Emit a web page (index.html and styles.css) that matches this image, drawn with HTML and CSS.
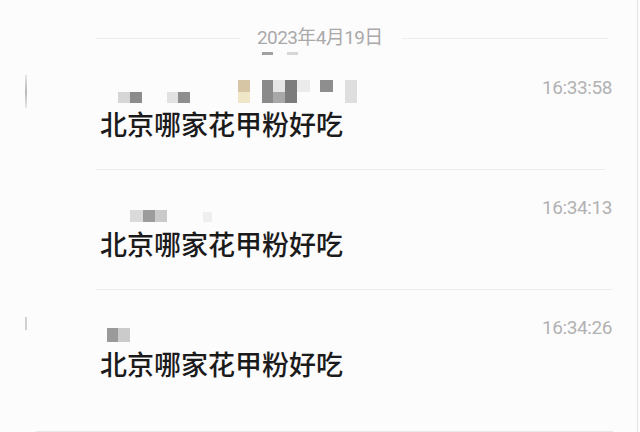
FILE: index.html
```html
<!DOCTYPE html>
<html lang="zh-CN">
<head>
    <meta charset="UTF-8">
    <meta name="viewport" content="width=device-width, initial-scale=1.0">
    <title>聊天记录</title>
    <link rel="stylesheet" href="styles.css">
</head>
<body>
    <div class="screen">
        <!-- 日期分隔 -->
        <div class="date-bar">
            <div class="date-line">
                <span class="rule-left"></span>
                <span class="date-text">2023年4月19日</span>
                <span class="rule-right"></span>
            </div>
            <div class="date-marks">
                <span class="mark dark"></span>
                <span class="mark light"></span>
            </div>
        </div>

        <div class="msg">
            <div class="gutter"><span class="edge-mark tall"></span></div>
            <div class="body">
                <svg class="name-blur" width="270" height="31" viewBox="0 0 270 31">
                    <rect x="22" y="14" width="12" height="11" fill="#d6d6d6"/>
                    <rect x="34" y="14" width="12" height="11" fill="#8c8c8c"/>
                    <rect x="71" y="14" width="11" height="11" fill="#e2e2e2"/>
                    <rect x="82" y="14" width="12" height="11" fill="#8e8e8e"/>
                    <rect x="142" y="2" width="12" height="12" fill="#d6c6a6"/>
                    <rect x="142" y="14" width="12" height="11" fill="#efe6c8"/>
                    <rect x="166" y="2" width="11" height="23" fill="#8a8a8a"/>
                    <rect x="177" y="2" width="12" height="12" fill="#e6e6e6"/>
                    <rect x="177" y="14" width="12" height="11" fill="#a8a8a8"/>
                    <rect x="189" y="2" width="12" height="23" fill="#7c7c7c"/>
                    <rect x="201" y="2" width="13" height="12" fill="#ebebeb"/>
                    <rect x="224" y="2" width="13" height="12" fill="#8e8e8e"/>
                    <rect x="249" y="2" width="12" height="23" fill="#dedede"/>
                </svg>
                <div class="text">北京哪家花甲粉好吃</div>
            </div>
            <div class="time">16:33:58</div>
        </div>
        <hr class="divider">

        <div class="msg">
            <div class="gutter"></div>
            <div class="body">
                <svg class="name-blur" width="270" height="31" viewBox="0 0 270 31">
                    <rect x="34" y="12" width="13" height="12" fill="#dadada"/>
                    <rect x="47" y="12" width="12" height="12" fill="#9c9c9c"/>
                    <rect x="59" y="12" width="12" height="12" fill="#cacaca"/>
                    <rect x="107" y="14" width="9" height="10" fill="#efefef"/>
                </svg>
                <div class="text">北京哪家花甲粉好吃</div>
            </div>
            <div class="time">16:34:13</div>
        </div>
        <hr class="divider wide">

        <div class="msg last">
            <div class="gutter"><span class="edge-mark short"></span></div>
            <div class="body">
                <svg class="name-blur" width="270" height="31" viewBox="0 0 270 31">
                    <rect x="11" y="10" width="11" height="14" fill="#9a9a9a"/>
                    <rect x="22" y="10" width="12" height="14" fill="#cbcbcb"/>
                </svg>
                <div class="text">北京哪家花甲粉好吃</div>
            </div>
            <div class="time">16:34:26</div>
        </div>
        <hr class="bottom-rule">
    </div>
</body>
</html>
```

FILE: styles.css
```css
body {
    margin: 0;
    background-color: #fdfcfd;
    font-family: Roboto, "Noto Sans CJK SC", sans-serif;
}
.screen {
    width: 637px;
    height: 432px;
    overflow: hidden;
    border-right: 1px solid #e4e4e4;
}

/* 日期 */
.date-bar {
    height: 50px;
    padding-top: 26px;
    box-sizing: border-box;
}
.date-line {
    display: flex;
    align-items: center;
    height: 24px;
    padding: 0 29px 0 96px;
}
.rule-left {
    width: 144px;
    border-top: 1px solid #eeeeee;
}
.rule-right {
    flex: 1;
    border-top: 1px solid #eeeeee;
}
.date-text {
    margin: 0 19px 0 17px;
    font-size: 19px;
    line-height: 24px;
    letter-spacing: -0.6px;
    color: #a9a9a9;
}
.date-marks {
    display: flex;
    gap: 14px;
    padding-left: 262px;
    margin-top: 2px;
}
.mark {
    width: 11px;
    height: 3px;
    filter: blur(0.5px);
}
.mark.dark { background-color: #a0a0a0; }
.mark.light { background-color: #d6d6d6; }

/* 消息行 */
.msg {
    display: grid;
    grid-template-columns: 96px 1fr auto;
    height: 119px;
    padding-right: 25px;
}
.msg.last {
    height: 141px;
}
.gutter {
    padding-left: 25px;
}
.edge-mark {
    display: block;
    width: 2px;
    background: linear-gradient(#e8e8e8, #b8b8b8 50%, #e8e8e8);
}
.edge-mark.tall {
    height: 33px;
    margin-top: 25px;
}
.edge-mark.short {
    height: 13px;
    margin-top: 27px;
    background: #d0d0d0;
}
.body {
    padding-top: 28px;
}
.name-blur {
    display: block;
    filter: blur(0.6px);
}
.text {
    padding-left: 4px;
    font-family: "Noto Sans CJK SC", sans-serif;
    font-size: 27px;
    font-weight: 500;
    line-height: 30px;
    color: #1b1b1b;
}
.time {
    padding-top: 26px;
    font-size: 19px;
    line-height: 24px;
    letter-spacing: -0.4px;
    color: #b2b2b2;
}
.divider {
    margin: 0 32px 0 96px;
    border: 0;
    border-top: 1px solid #ececec;
    height: 0;
}
.divider.wide {
    margin-right: 25px;
}
.bottom-rule {
    margin: 0 24px 0 36px;
    border: 0;
    border-top: 1px solid #e8e8e8;
    height: 0;
}
```
